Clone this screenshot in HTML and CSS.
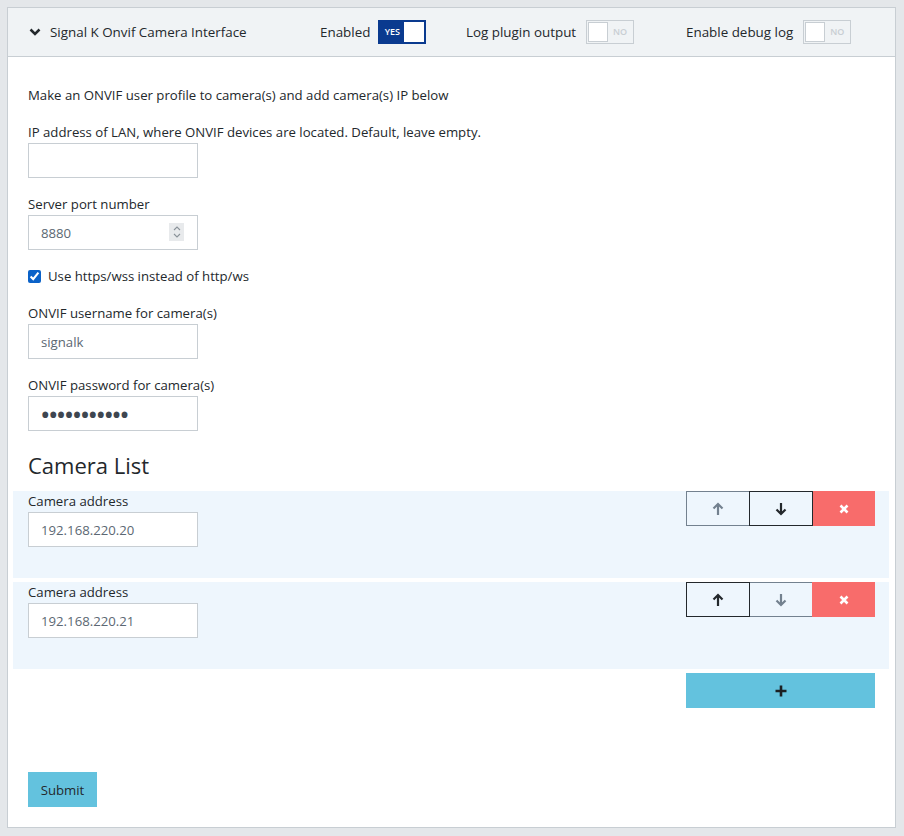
FILE: index.html
```html
<!DOCTYPE html>
<html>
<head>
<meta charset="utf-8">
<link rel="stylesheet" href="styles.css">
</head>
<body>
<div class="card">
  <div class="card-header">
    <div class="title-col">
      <svg class="chev" width="12" height="8" viewBox="0 0 12 8"><path d="M1.5 1.5 L6 6 L10.5 1.5" fill="none" stroke="#23282c" stroke-width="2.5"/></svg>
      <span class="title">Signal K Onvif Camera Interface</span>
    </div>
    <div class="hgroup g1">
      <span>Enabled</span>
      <span class="toggle on"><span class="tlabel">YES</span><span class="knob"></span></span>
    </div>
    <div class="hgroup g2">
      <span>Log plugin output</span>
      <span class="toggle off"><span class="knob"></span><span class="tlabel">NO</span></span>
    </div>
    <div class="hgroup g3">
      <span>Enable debug log</span>
      <span class="toggle off"><span class="knob"></span><span class="tlabel">NO</span></span>
    </div>
  </div>
  <div class="card-body">
    <p class="desc">Make an ONVIF user profile to camera(s) and add camera(s) IP below</p>
    <div class="field">
      <label>IP address of LAN, where ONVIF devices are located. Default, leave empty.</label>
      <input class="inp" type="text" value="">
    </div>
    <div class="field">
      <label>Server port number</label>
      <div class="numwrap">
        <input class="inp" type="text" value="8880">
        <span class="spin"><svg width="10" height="16" viewBox="0 0 10 16"><path d="M2 6 L5 3 L8 6" fill="none" stroke="#8a9299" stroke-width="1.1"/><path d="M2 10 L5 13 L8 10" fill="none" stroke="#8a9299" stroke-width="1.1"/></svg></span>
      </div>
    </div>
    <div class="check">
      <input type="checkbox" checked>
      <span>Use https/wss instead of http/ws</span>
    </div>
    <div class="field">
      <label>ONVIF username for camera(s)</label>
      <input class="inp" type="text" value="signalk">
    </div>
    <div class="field">
      <label>ONVIF password for camera(s)</label>
      <input class="inp pw" type="password" value="12345678901">
    </div>
    <h3 class="list-title">Camera List</h3>
    <div class="item">
      <div class="item-field">
        <label>Camera address</label>
        <input class="inp" type="text" value="192.168.220.20">
      </div>
      <div class="btns">
        <button class="b mv dim"><svg width="12" height="14" viewBox="0 0 12 14"><path d="M6 13 V2 M1.5 6.5 L6 2 L10.5 6.5" fill="none" stroke="currentColor" stroke-width="2.2"/></svg></button>
        <button class="b mv dark"><svg width="12" height="14" viewBox="0 0 12 14"><path d="M6 1 V12 M1.5 7.5 L6 12 L10.5 7.5" fill="none" stroke="currentColor" stroke-width="2.2"/></svg></button>
        <button class="b del"><svg width="10" height="10" viewBox="0 0 10 10"><path d="M1.5 1.5 L8.5 8.5 M8.5 1.5 L1.5 8.5" fill="none" stroke="#fff" stroke-width="2.6"/></svg></button>
      </div>
    </div>
    <div class="item">
      <div class="item-field">
        <label>Camera address</label>
        <input class="inp" type="text" value="192.168.220.21">
      </div>
      <div class="btns">
        <button class="b mv dark"><svg width="12" height="14" viewBox="0 0 12 14"><path d="M6 13 V2 M1.5 6.5 L6 2 L10.5 6.5" fill="none" stroke="currentColor" stroke-width="2.2"/></svg></button>
        <button class="b mv dim"><svg width="12" height="14" viewBox="0 0 12 14"><path d="M6 1 V12 M1.5 7.5 L6 12 L10.5 7.5" fill="none" stroke="currentColor" stroke-width="2.2"/></svg></button>
        <button class="b del"><svg width="10" height="10" viewBox="0 0 10 10"><path d="M1.5 1.5 L8.5 8.5 M8.5 1.5 L1.5 8.5" fill="none" stroke="#fff" stroke-width="2.6"/></svg></button>
      </div>
    </div>
    <div class="addrow">
      <button class="add"><svg width="12" height="12" viewBox="0 0 12 12"><path d="M6 0.5 V11.5 M0.5 6 H11.5" fill="none" stroke="#1b1f22" stroke-width="2.6"/></svg></button>
    </div>
    <button class="submit">Submit</button>
  </div>
</div>
</body>
</html>
```
FILE: styles.css
```css
* { box-sizing: border-box; }
html, body { margin: 0; }
body {
  background: #e4e7ea;
  padding: 7px 8px 8px 7px;
  font-family: "Open Sans", "Noto Sans", sans-serif;
  font-size: 13.2px;
  color: #23282c;
}
.card {
  background: #fff;
  border: 1px solid #c8ced3;
  height: 821px;
}
.card-header {
  background: #f0f3f5;
  border-bottom: 1px solid #c8ced3;
  height: 49px;
  display: flex;
  align-items: center;
  padding-left: 21px;
  font-size: 13.4px;
}
.title-col {
  width: 291px;
  display: flex;
  align-items: center;
  margin-top: -1px;
}
.chev { margin-right: 9px; margin-top: 1px; }
.hgroup {
  display: flex;
  align-items: center;
  gap: 10px;
  margin-top: -1px;
}
.g1 { width: 146px; gap: 8px; }
.g2 { width: 220px; }
.toggle {
  display: inline-flex;
  align-items: center;
  width: 48px;
  height: 24px;
  border: 1px solid #c8ced3;
  padding: 1px;
}
.toggle.on {
  background: #0a3a8f;
  border-color: #0a3a8f;
  justify-content: space-between;
}
.toggle .knob {
  width: 20px;
  height: 20px;
  background: #fff;
}
.toggle.off .knob { border: 1px solid #c8ced3; }
.tlabel {
  font-size: 9px;
  font-weight: 600;
  flex: 1;
  text-align: center;
}
.toggle.on .tlabel { color: #fff; }
.toggle.off .tlabel { color: #c8ced3; }
.card-body {
  padding: 28px 20px 20px 20px;
}
.desc { margin: 0 0 16px; line-height: 21px; }
.field { margin-bottom: 16px; }
.field label, .item-field label {
  display: block;
  line-height: 21px;
}
.inp {
  display: block;
  width: 170px;
  height: 35px;
  border: 1px solid #c8ced3;
  font-family: inherit;
  font-size: 13.2px;
  color: #5c6873;
  padding: 0 12px;
  background: #fff;
  outline: none;
}
.inp.pw {
  font-size: 28px;
  letter-spacing: -2.6px;
  color: #3e4650;
  padding-left: 11px;
}
.numwrap { position: relative; width: 170px; }
.spin {
  position: absolute;
  left: 141px;
  top: 8px;
  width: 15px;
  height: 18px;
  background: #e8eaec;
  display: flex;
  align-items: center;
  justify-content: center;
}
.check {
  display: flex;
  align-items: center;
  gap: 7px;
  margin: 0 0 16px;
  line-height: 21px;
}
.check input {
  margin: 0;
  width: 13px;
  height: 13px;
  accent-color: #0b62c8;
}
.list-title {
  font-size: 22px;
  font-weight: 400;
  margin: 20px 0 12px;
  line-height: 28px;
}
.item {
  background: #eef6fd;
  margin: 0 -14px 4px -15px;
  padding: 0 14px 0 15px;
  height: 87px;
  display: flex;
  justify-content: space-between;
}
.btns { display: flex; height: 35px; }
.b {
  height: 35px;
  border: 1px solid #73818f;
  background: transparent;
  display: flex;
  align-items: center;
  justify-content: center;
  padding: 0;
  cursor: pointer;
}
.mv { width: 64px; }
.mv.dim { color: #73818f; border-color: #73818f; }
.mv.dark { color: #23282c; border-color: #23282c; position: relative; }
.btns .b + .b { margin-left: -1px; }
.del { width: 63px; background: #f86c6b; border-color: #f86c6b; }
.addrow { display: flex; justify-content: flex-end; }
.add {
  width: 189px;
  height: 35px;
  background: #63c2de;
  border: none;
  display: flex;
  align-items: center;
  justify-content: center;
}
.submit {
  margin-top: 64px;
  width: 69px;
  height: 35px;
  background: #63c2de;
  border: none;
  font-family: inherit;
  font-size: 13.2px;
  color: #23282c;
}
```
